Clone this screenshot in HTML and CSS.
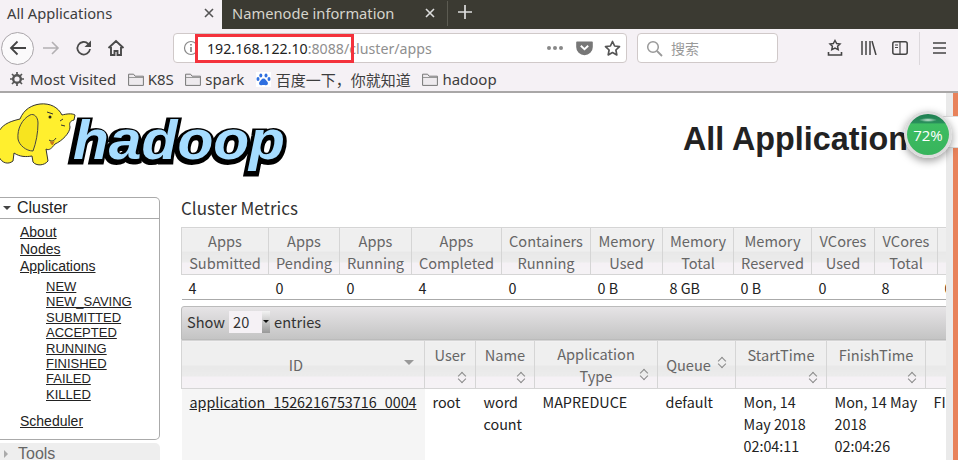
FILE: index.html
```html
<!DOCTYPE html>
<html lang="en">
<head>
    <meta charset="UTF-8">
    <meta name="viewport" content="width=device-width, initial-scale=1.0">
    <title>All Applications</title>
    <link rel="stylesheet" href="styles.css">
</head>
<body>
    <div class="tabbar">
        <div class="tab active"><span class="tab-title">All Applications</span>
            <svg class="tab-x" width="12" height="12" viewBox="0 0 12 12"><path d="M2 2l8 8M10 2l-8 8" stroke="#555" stroke-width="1.6"/></svg>
        </div>
        <div class="tab second"><span class="tab-title">Namenode information</span>
            <svg class="tab-x" width="12" height="12" viewBox="0 0 12 12"><path d="M2 2l8 8M10 2l-8 8" stroke="#ddd" stroke-width="1.6"/></svg>
        </div>
        <svg class="tab-plus" width="16" height="16" viewBox="0 0 16 16"><path d="M8 1v14M1 8h14" stroke="#ddd" stroke-width="1.7"/></svg>
    </div>

    <div class="navbar">
        <div class="back">
            <svg width="20" height="20" viewBox="0 0 20 20"><path d="M18 10H3M9.500 3.500L3 10l6.500 6.500" fill="none" stroke="#444" stroke-width="1.800"/></svg>
        </div>
        <svg class="nav-icon fwd" width="18" height="18" viewBox="0 0 18 18"><path d="M1 9h15M10 3l6 6-6 6" fill="none" stroke="#b3b0b3" stroke-width="1.600"/></svg>
        <svg class="nav-icon reload" width="18" height="18" viewBox="0 0 18 18"><path d="M15 10a6.300 6.300 0 1 1-1.800-5.200L15.500 7" fill="none" stroke="#4a4a4a" stroke-width="1.800"/><path d="M16 1.500V8H9.500z" fill="#4a4a4a"/></svg>
        <svg class="nav-icon home" width="18" height="18" viewBox="0 0 18 18"><path d="M1.500 9L9 2l7.500 7M4 8v8h3.500v-4h3v4H14V8" fill="none" stroke="#4a4a4a" stroke-width="1.900"/></svg>

        <div class="urlbar">
            <svg class="info" width="16" height="16" viewBox="0 0 16 16"><circle cx="8" cy="8" r="6.500" fill="none" stroke="#888" stroke-width="1.200"/><path d="M8 7v5M8 4v1.600" stroke="#777" stroke-width="1.500"/></svg>
            <div class="url"><span class="host">192.168.122.10</span>:8088/cluster/apps</div>
            <div class="dots"><i></i><i></i><i></i></div>
            <svg class="pocket" width="17" height="16" viewBox="0 0 17 16"><path d="M1 1.500h15a.8.8 0 0 1 .8.8V7a8.300 8.300 0 0 1-16.600 0V2.300A.8.8 0 0 1 1 1.500z" fill="#777"/><path d="M4.800 5.800l3.700 3.400 3.700-3.400" fill="none" stroke="#fff" stroke-width="1.900"/></svg>
            <svg class="star" width="17" height="17" viewBox="0 0 17 17"><path d="M8.500 1.500l2.100 4.500 4.900.6-3.600 3.400.9 4.900-4.300-2.400-4.300 2.400.9-4.900L1.500 6.600l4.900-.6z" fill="none" stroke="#555" stroke-width="1.700" stroke-linejoin="round"/></svg>
        </div>

        <div class="searchbar">
            <svg width="17" height="17" viewBox="0 0 17 17"><circle cx="7" cy="7" r="5.300" fill="none" stroke="#999" stroke-width="1.500"/><path d="M11 11l5 5" stroke="#999" stroke-width="1.800"/></svg>
            <span>搜索</span>
        </div>

        <svg class="tool saved" width="16" height="18" viewBox="0 0 16 18"><path d="M8 1.500l1.700 3 3.300.5-2.400 2.300.6 3.300L8 9l-3.200 1.600.6-3.300L3 5l3.300-.5z" fill="none" stroke="#444" stroke-width="1.500"/><path d="M1.500 13v3h13v-3" fill="none" stroke="#444" stroke-width="1.600"/></svg>
        <svg class="tool library" width="16" height="14" viewBox="0 0 16 14"><path d="M1 0v14M5 0v14M9 0v14M11 0l4 14" fill="none" stroke="#444" stroke-width="1.500"/></svg>
        <svg class="tool side" width="16" height="14" viewBox="0 0 16 14"><rect x=".8" y=".8" width="14.400" height="12.400" rx="2" fill="none" stroke="#444" stroke-width="1.500"/><path d="M3 4h3M3 6.500h3M8 1v12" stroke="#444" stroke-width="1.200"/></svg>
        <div class="tool-sep"></div>
        <svg class="tool burger" width="13" height="12" viewBox="0 0 13 12"><path d="M0 1h13M0 6h13M0 11h13" stroke="#444" stroke-width="1.500"/></svg>
    </div>

    <div class="bookmarks">
        <div class="bm first">
            <svg width="14" height="14" viewBox="0 0 14 14"><circle cx="7" cy="7" r="3.800" fill="none" stroke="#555" stroke-width="2.400"/><path d="M7 0v3M7 11v3M0 7h3M11 7h3M2 2l2 2M10 10l2 2M12 2l-2 2M4 10l-2 2" stroke="#555" stroke-width="1.700"/></svg>
            Most Visited</div>
        <div class="bm">
            <svg class="folder" width="16" height="13" viewBox="0 0 16 13"><path d="M.6 12.400V1.200h5l1.500 2h8.300v9.200z" fill="#eeeaee" stroke="#777"/><path d="M1 4.500h14" stroke="#999"/></svg>
            K8S</div>
        <div class="bm">
            <svg class="folder" width="16" height="13" viewBox="0 0 16 13"><path d="M.6 12.400V1.200h5l1.500 2h8.300v9.200z" fill="#eeeaee" stroke="#777"/><path d="M1 4.500h14" stroke="#999"/></svg>
            spark</div>
        <div class="bm baidu">
            <svg width="15" height="15" viewBox="0 0 15 15"><rect width="15" height="15" fill="#fff"/><ellipse cx="4.800" cy="3.400" rx="1.500" ry="2" fill="#2f6fe0"/><ellipse cx="10" cy="3.400" rx="1.500" ry="2" fill="#2f6fe0"/><ellipse cx="2" cy="7" rx="1.500" ry="2" fill="#2f6fe0"/><ellipse cx="13" cy="7" rx="1.500" ry="2" fill="#2f6fe0"/><path d="M7.500 6.500c-2 0-2.500 2-4 3.500-1.200 1.500 0 3.500 2 3.200 1-.2 3-.2 4 0 2 .3 3.200-1.700 2-3.200-1.500-1.500-2-3.500-4-3.500z" fill="#2f6fe0"/></svg>
            百度一下，你就知道</div>
        <div class="bm">
            <svg class="folder" width="16" height="13" viewBox="0 0 16 13"><path d="M.6 12.400V1.200h5l1.500 2h8.300v9.200z" fill="#eeeaee" stroke="#777"/><path d="M1 4.500h14" stroke="#999"/></svg>
            hadoop</div>
    </div>

    <div class="viewport">
        <div class="page">
            <div class="header">
                <svg class="logo" width="292" height="80" viewBox="0 0 292 80">
                    <text class="logo-shadow" x="71" y="60" textLength="214" lengthAdjust="spacingAndGlyphs">hadoop</text>
                    <text class="logo-text" x="73" y="58" textLength="212" lengthAdjust="spacingAndGlyphs">hadoop</text>
                    <path d="M40 3C50 2 58 6 62 14 66 13 72 12 75 14L74 19C70 20 69 22 70 26 70 32 62 40 55 43 52 47 49 50 46 48L48 60C44 65 36 65 33 61L32 55C26 56 20 56 14 52L13 60C8 64 2 62-1 56L-1 30C4 22 12 20 20 18 24 8 32 4 40 3Z" fill="#ffef2e" stroke="#333" stroke-width="1"/>
                    <path d="M30 14C22 18 17 28 18 38 19 44 26 50 33 50 36 42 38 32 38 22 38 16 34 12 30 14Z" fill="#f7e41f" stroke="#444" stroke-width="1"/>
                    <circle cx="50" cy="16" r="1.500" fill="#222"/>
                    <path d="M47 11l6 2M60 20l3-2M61 24l4 1M49 39c3 2 5 1 7-2" fill="none" stroke="#333" stroke-width="1"/>
                    <path d="M50 40c2 1 4 1 5-1l-2 5c-2 0-3-2-3-4z" fill="#c8751b"/>
                </svg>
                <h1>All Applications</h1>
            </div>
            <div class="columns">
                <div class="sidebar">
                    <div class="sb-box">
                        <div class="sb-head"><span class="caret-down"></span>Cluster</div>
                        <ul class="sb-links">
                            <li><a>About</a></li>
                            <li><a>Nodes</a></li>
                            <li><a>Applications</a>
                                <ul class="sb-states">
                                    <li><a>NEW</a></li>
                                    <li><a>NEW_SAVING</a></li>
                                    <li><a>SUBMITTED</a></li>
                                    <li><a>ACCEPTED</a></li>
                                    <li><a>RUNNING</a></li>
                                    <li><a>FINISHED</a></li>
                                    <li><a>FAILED</a></li>
                                    <li><a>KILLED</a></li>
                                </ul>
                            </li>
                            <li class="sched"><a>Scheduler</a></li>
                        </ul>
                    </div>
                    <div class="sb-closed"><span class="caret-right"></span>Tools</div>
                </div>

                <div class="main">
                    <h3>Cluster Metrics</h3>
                    <table class="metrics">
                        <thead>
                            <tr>
                                <th>Apps<br>Submitted</th>
                                <th>Apps<br>Pending</th>
                                <th>Apps<br>Running</th>
                                <th>Apps<br>Completed</th>
                                <th>Containers<br>Running</th>
                                <th>Memory<br>Used</th>
                                <th>Memory<br>Total</th>
                                <th>Memory<br>Reserved</th>
                                <th>VCores<br>Used</th>
                                <th>VCores<br>Total</th>
                                <th>VCores<br>Reserved</th>
                            </tr>
                        </thead>
                        <tbody>
                            <tr>
                                <td>4</td><td>0</td><td>0</td><td>4</td><td>0</td><td>0 B</td><td>8 GB</td><td>0 B</td><td>0</td><td>8</td><td>0</td>
                            </tr>
                        </tbody>
                    </table>

                    <div class="controls">Show <span class="select"><span>20</span><span class="select-btn"></span></span> entries</div>

                    <table class="apps">
                        <thead>
                            <tr>
                                <th class="id-col">ID<span class="sort-down"></span></th>
                                <th>User<span class="sort"></span></th>
                                <th>Name<span class="sort"></span></th>
                                <th class="type-col">Application Type<span class="sort"></span></th>
                                <th class="queue-col">Queue<span class="sort"></span></th>
                                <th>StartTime<span class="sort"></span></th>
                                <th>FinishTime<span class="sort"></span></th>
                                <th>State<span class="sort"></span></th>
                            </tr>
                        </thead>
                        <tbody>
                            <tr>
                                <td class="id-cell"><a>application_1526216753716_0004</a></td>
                                <td>root</td>
                                <td>word count</td>
                                <td>MAPREDUCE</td>
                                <td>default</td>
                                <td>Mon, 14 May 2018 02:04:11</td>
                                <td>Mon, 14 May 2018 02:04:26</td>
                                <td>FINISHED</td>
                            </tr>
                        </tbody>
                    </table>
                </div>
            </div>
        </div>
        <div class="scrollbar"></div>
        <div class="badge-tail"></div>
        <div class="badge"><span>72%</span></div>
    </div>

    <div class="url-mark"></div>
</body>
</html>
```

FILE: styles.css
```css
* {
    box-sizing: border-box;
}

html, body {
    margin: 0;
    height: 460px;
    overflow: hidden;
}

body {
    position: relative;
    font-family: "Noto Sans", "Noto Sans CJK SC", sans-serif;
    background: #fff;
    color: #333;
}

/* browser chrome */
.tabbar {
    display: flex;
    align-items: flex-start;
    height: 29px;
    background: #3b3a32;
}

.tab {
    display: flex;
    align-items: center;
    justify-content: space-between;
    height: 29px;
    padding-bottom: 3px;
    font-size: 14.700px;
}

.tab.active {
    width: 222px;
    padding-left: 7px;
    padding-right: 7px;
    background: #f5f1f5;
    color: #3d3d3d;
}

.tab.second {
    width: 226px;
    height: 25px;
    margin-top: 1px;
    padding: 0 11px 1px 10px;
    color: #d6d4cc;
    border-right: 1px solid #5c5b52;
}

.tab-plus {
    margin: 4px 0 0 9px;
}

.navbar {
    display: flex;
    align-items: center;
    height: 38px;
    background: #f5f1f5;
}

.back {
    display: flex;
    align-items: center;
    justify-content: center;
    width: 33px;
    height: 33px;
    margin-left: 1px;
    border: 1px solid #aaa6aa;
    border-radius: 50%;
    background: #fbfafb;
}

.fwd {
    margin-left: 8px;
}

.reload {
    margin-left: 15px;
}

.home {
    margin-left: 14px;
}

.urlbar {
    display: flex;
    align-items: center;
    width: 454px;
    height: 30px;
    margin-left: 48px;
    padding: 0 5px 0 9px;
    background: #fff;
    border: 1px solid #d0c9c9;
    border-radius: 4px;
}

.url {
    flex: 1;
    margin-left: 8px;
    font-size: 14.200px;
    color: #8f8f8f;
    white-space: nowrap;
}

.host {
    color: #222;
}

.dots {
    display: flex;
    gap: 2px;
    margin-right: 13px;
}

.dots i {
    width: 4px;
    height: 4px;
    border-radius: 50%;
    background: #888;
}

.star {
    margin-left: 11px;
}

.searchbar {
    display: flex;
    align-items: center;
    gap: 8px;
    width: 141px;
    height: 30px;
    margin-left: 10px;
    padding-left: 8px;
    background: #fff;
    border: 1px solid #d0c9c9;
    border-radius: 4px;
    font-size: 14px;
    color: #999;
}

.saved {
    margin-left: 49px;
}

.library {
    margin-left: 18px;
}

.side {
    margin-left: 15px;
}

.tool-sep {
    width: 1px;
    height: 33px;
    margin-left: 11px;
    background: #dcd8dc;
}

.burger {
    margin-left: 13px;
}

.bookmarks {
    display: flex;
    align-items: center;
    gap: 11.500px;
    height: 26px;
    padding-left: 10px;
    background: #f5f1f5;
    border-bottom: 2px solid #a9a7a7;
    font-size: 15px;
    color: #3d3d3d;
}

.bm {
    display: flex;
    align-items: center;
    gap: 4px;
    white-space: nowrap;
}

.bm.first {
    gap: 6px;
}

.baidu {
    gap: 5px;
}

/* page */
.viewport {
    position: relative;
    height: 369px;
    overflow: hidden;
}

.page {
    width: 1300px;
}

.header {
    display: flex;
    height: 104px;
    padding-top: 8px;
}

.logo {
    flex: none;
    overflow: visible;
}

.logo text {
    font-family: "Liberation Sans", sans-serif;
    font-weight: 700;
    font-style: italic;
    font-size: 56px;
}

.logo-shadow {
    fill: #000;
    stroke: #000;
    stroke-width: 7px;
}

.logo-text {
    fill: #a5dcff;
}

h1 {
    margin: 18px 0 0 391px;
    font-family: "Liberation Sans", sans-serif;
    font-size: 32.300px;
    line-height: 40px;
    color: #222;
    white-space: nowrap;
}

.columns {
    display: flex;
    gap: 21px;
}

.sidebar {
    flex: none;
    width: 160px;
    font-family: "Liberation Sans", sans-serif;
}

.sb-box {
    height: 243px;
    border: 1px solid #aaa;
    border-left: 0;
    border-radius: 0 5px 5px 0;
}

.sb-head {
    display: flex;
    align-items: center;
    height: 21px;
    padding-left: 3px;
    border-bottom: 1px solid #aaa;
    font-size: 16px;
    color: #222;
}

.caret-down {
    width: 0;
    height: 0;
    margin-right: 6px;
    border: 4px solid transparent;
    border-top-color: #444;
    border-bottom: 0;
}

.caret-right {
    width: 0;
    height: 0;
    margin: 0 10px 0 4px;
    border: 4px solid transparent;
    border-left-color: #aaa;
    border-right: 0;
}

.sb-links, .sb-states {
    margin: 0;
    list-style: none;
}

.sb-links {
    padding: 5px 0 0 20px;
    font-size: 14px;
    line-height: 17px;
}

.sb-states {
    padding: 4px 0 0 26px;
    font-size: 13px;
    line-height: 15.400px;
}

.sched {
    margin-top: 11px;
}

a {
    color: #222;
    text-decoration: underline;
}

.sb-closed {
    display: flex;
    align-items: center;
    height: 22px;
    margin-top: 3px;
    background: #eee;
    border-radius: 0 5px 0 0;
    font-size: 16px;
    color: #666;
}

.main {
    flex: none;
    width: 1000px;
    font-family: "Noto Sans CJK SC", "Noto Sans", sans-serif;
    font-size: 14.600px;
}

h3 {
    margin: 0 0 8px;
    font-size: 17px;
    font-weight: 400;
    line-height: 22px;
    color: #333;
}

table {
    border-collapse: collapse;
    table-layout: fixed;
}

th {
    font-weight: 400;
    color: #666;
    border: 1px solid #d5d5d5;
    background: linear-gradient(#efefef 0, #efefef 50%, #e8e8e8 50%, #ececec 75%, #f5f1f5 75%, #f5f2f5 100%);
}

.metrics {
    width: 836px;
    border-bottom: 1px solid #aaa;
}

.metrics th {
    height: 47px;
    padding: 2px 0 0;
    line-height: 22px;
    white-space: nowrap;
}

.metrics td {
    height: 25px;
    padding: 0 0 0 7px;
    font-size: 14.350px;
    color: #222;
}

.metrics th:nth-child(1) { width: 87px; }
.metrics th:nth-child(2) { width: 71px; }
.metrics th:nth-child(3) { width: 72px; }
.metrics th:nth-child(4) { width: 90px; }
.metrics th:nth-child(5) { width: 89px; }
.metrics th:nth-child(6) { width: 72px; }
.metrics th:nth-child(7) { width: 71px; }
.metrics th:nth-child(8) { width: 78px; }
.metrics th:nth-child(9) { width: 63px; }
.metrics th:nth-child(10) { width: 63px; }
.metrics th:nth-child(11) { width: 80px; }

.controls {
    display: flex;
    align-items: center;
    gap: 3px;
    width: 1000px;
    height: 34px;
    margin-top: 6px;
    padding: 0 0 3px 5px;
    background: linear-gradient(#e6e4e6, #c4c4c4);
    border: 1px solid #bbb;
    border-radius: 3px 0 0 0;
    color: #333;
}

.select {
    position: relative;
    display: flex;
    justify-content: space-between;
    width: 41px;
    margin: 0 1px;
    padding-left: 4px;
    background: #f5f1f5;
    line-height: 22px;
    color: #333;
}

.select-btn {
    position: relative;
    width: 8px;
    background: linear-gradient(#f3f3f3, #999);
}

.select-btn::after {
    content: "";
    position: absolute;
    left: 1px;
    top: 9px;
    border: 3px solid transparent;
    border-top-color: #111;
}

.apps {
    width: 824px;
}

.apps th {
    position: relative;
    height: 48px;
    padding: 0 18px;
    line-height: 22px;
}

.apps td {
    vertical-align: top;
    padding: 2px 8px 0;
    font-size: 14.350px;
    line-height: 22px;
    color: #222;
    height: 80px;
}

.apps th:nth-child(1) { width: 243px; }
.apps th:nth-child(2) { width: 51px; }
.apps th:nth-child(3) { width: 59px; }
.apps th:nth-child(4) { width: 123px; }
.apps th:nth-child(5) { width: 78px; }
.apps th:nth-child(6) { width: 91px; }
.apps th:nth-child(7) { width: 99px; }
.apps th:nth-child(8) { width: 80px; }

.apps th:nth-child(2),
.apps th:nth-child(3),
.apps th:nth-child(6),
.apps th:nth-child(7) {
    padding: 0 0 20px;
}

.apps .id-col {
    padding: 0 32px 0 18px;
}

.apps .queue-col {
    padding: 0 22px 0 6px;
}

.apps .id-cell {
    background: #f5f5f5;
}

.sort, .sort-down {
    position: absolute;
    right: 10px;
    bottom: 5px;
    width: 8px;
    height: 11px;
}

.sort::before, .sort::after {
    content: "";
    position: absolute;
    left: 1.500px;
    width: 5px;
    height: 5px;
    border: solid #8a8a8a;
    border-width: 1px 0 0 1px;
    transform: rotate(45deg);
}

.sort::before {
    top: 1px;
}

.sort::after {
    bottom: 1px;
    transform: rotate(225deg);
}

.type-col .sort {
    bottom: 8px;
}

.queue-col .sort {
    top: 16px;
    right: 10px;
}

.sort-down {
    right: 10px;
    top: 19px;
    height: 0;
    width: 0;
    border: 5px solid transparent;
    border-top-color: #999;
    border-bottom: 0;
}

.scrollbar {
    position: absolute;
    top: 0;
    right: 0;
    bottom: 0;
    width: 12px;
    background: #eaeaea;
    border-right: 5px solid #e8825a;
}

.badge {
    position: absolute;
    left: 904px;
    top: 18px;
    display: flex;
    align-items: center;
    justify-content: center;
    width: 48px;
    height: 47px;
    border: 3px solid #dcdcdc;
    border-radius: 50%;
    background: radial-gradient(ellipse 9px 2px at 50% 6px, #cfe8da, transparent), linear-gradient(#1d7f50 0, #2a8f5c 22%, #3dbd62 24%, #37b45c 100%);
    box-shadow: 0 3px 8px rgba(0, 0, 0, 0.4);
    color: #fff;
    font-family: "Open Sans", sans-serif;
    font-size: 15px;
}

.badge-tail {
    position: absolute;
    left: 935px;
    top: 23px;
    width: 23px;
    height: 32px;
    background: #fff;
    border: 1px solid #ddd;
    border-right: 0;
}

/* red annotation drawn over the address */
.url-mark {
    position: absolute;
    left: 195px;
    top: 34px;
    width: 159px;
    height: 29px;
    border: 3px solid #f4323c;
}
```
